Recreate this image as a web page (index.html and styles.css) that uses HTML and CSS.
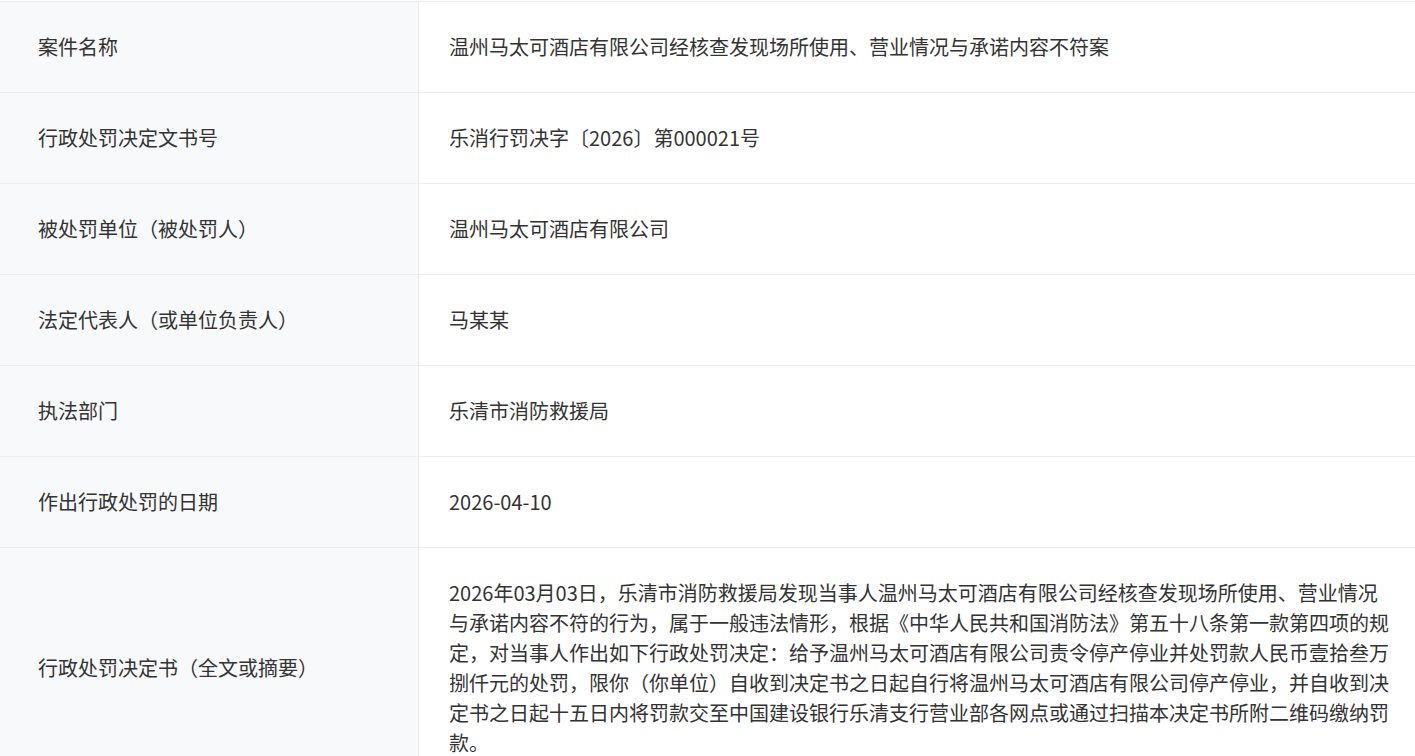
FILE: index.html
```html
<!DOCTYPE html>
<html lang="zh-CN">
<head>
<meta charset="utf-8">
<title>行政处罚决定</title>
<link rel="stylesheet" href="styles.css">
</head>
<body>
<div class="table">
  <div class="row">
    <div class="label">案件名称</div>
    <div class="value">温州马太可酒店有限公司经核查发现场所使用、营业情况与承诺内容不符案</div>
  </div>
  <div class="row">
    <div class="label">行政处罚决定文书号</div>
    <div class="value">乐消行罚决字〔2026〕第000021号</div>
  </div>
  <div class="row">
    <div class="label">被处罚单位（被处罚人）</div>
    <div class="value">温州马太可酒店有限公司</div>
  </div>
  <div class="row">
    <div class="label">法定代表人（或单位负责人）</div>
    <div class="value">马某某</div>
  </div>
  <div class="row">
    <div class="label">执法部门</div>
    <div class="value">乐清市消防救援局</div>
  </div>
  <div class="row">
    <div class="label">作出行政处罚的日期</div>
    <div class="value">2026-04-10</div>
  </div>
  <div class="row">
    <div class="label">行政处罚决定书（全文或摘要）</div>
    <div class="value">2026年03月03日，乐清市消防救援局发现当事人温州马太可酒店有限公司经核查发现场所使用、营业情况与承诺内容不符的行为，属于一般违法情形，根据《中华人民共和国消防法》第五十八条第一款第四项的规定，对当事人作出如下行政处罚决定：给予温州马太可酒店有限公司责令停产停业并处罚款人民币壹拾叁万捌仟元的处罚，限你（你单位）自收到决定书之日起自行将温州马太可酒店有限公司停产停业，并自收到决定书之日起十五日内将罚款交至中国建设银行乐清支行营业部各网点或通过扫描本决定书所附二维码缴纳罚款。</div>
  </div>
</div>
</body>
</html>
```

FILE: styles.css
```css
html, body {
  margin: 0;
  padding: 0;
  background: #ffffff;
}
body {
  padding-top: 1px;
  font-family: "Noto Sans CJK SC", "Noto Sans", sans-serif;
  font-size: 20px;
  line-height: 30px;
  color: #333333;
}
.table {
  border-top: 1px solid #ebedf0;
  width: 1415px;
}
.row {
  display: grid;
  grid-template-columns: 419px 1fr;
  border-bottom: 1px solid #ebedf0;
}
.label {
  background: #f8f9fb;
  border-right: 1px solid #ebedf0;
  padding: 30px 20px 30px 38px;
  display: flex;
  align-items: center;
}
.value {
  padding: 30px 22px 30px 30px;
  display: flex;
  align-items: center;
}
```
